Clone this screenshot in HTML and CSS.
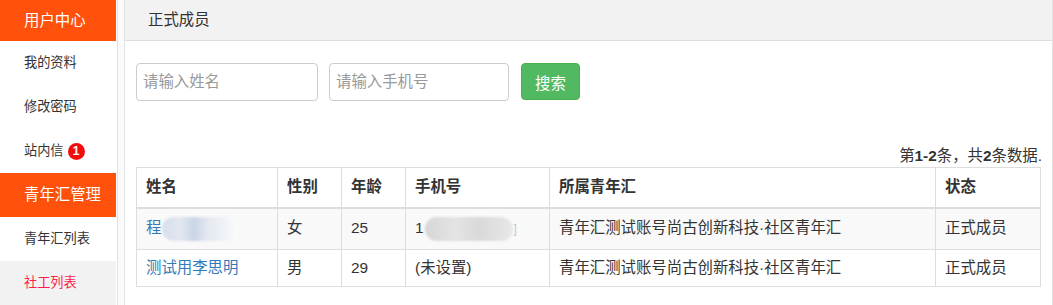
FILE: index.html
```html
<!DOCTYPE html>
<html lang="zh-CN">
<head>
<meta charset="utf-8">
<title>正式成员</title>
<link rel="stylesheet" href="styles.css">
</head>
<body>
<div class="page">
  <aside class="sidebar">
    <div class="side-head">用户中心</div>
    <div class="side-item">我的资料</div>
    <div class="side-item">修改密码</div>
    <div class="side-item">站内信 <span class="badge">1</span></div>
    <div class="side-head">青年汇管理</div>
    <div class="side-item">青年汇列表</div>
    <div class="side-item active">社工列表</div>
  </aside>
  <main class="main">
    <div class="main-head">正式成员</div>
    <div class="content">
      <div class="search-row">
        <input class="field field-name" type="text" placeholder="请输入姓名">
        <input class="field field-phone" type="text" placeholder="请输入手机号">
        <button class="btn-search" type="button">搜索</button>
      </div>
      <div class="summary">第<b>1-2</b>条，共<b>2</b>条数据.</div>
      <table class="grid">
        <thead>
          <tr>
            <th class="c-name">姓名</th>
            <th class="c-sex">性别</th>
            <th class="c-age">年龄</th>
            <th class="c-phone">手机号</th>
            <th class="c-org">所属青年汇</th>
            <th class="c-state">状态</th>
          </tr>
        </thead>
        <tbody>
          <tr class="striped">
            <td><a class="link" href="#">程<span class="blur blur-name"></span></a></td>
            <td>女</td>
            <td>25</td>
            <td>1<span class="blur blur-phone"></span><span class="tail">]</span></td>
            <td>青年汇测试账号尚古创新科技·社区青年汇</td>
            <td>正式成员</td>
          </tr>
          <tr>
            <td><a class="link" href="#">测试用李思明</a></td>
            <td>男</td>
            <td>29</td>
            <td>(未设置)</td>
            <td>青年汇测试账号尚古创新科技·社区青年汇</td>
            <td>正式成员</td>
          </tr>
        </tbody>
      </table>
    </div>
  </main>
</div>
</body>
</html>
```
FILE: styles.css
```css
* { box-sizing: border-box; }
html, body { margin: 0; padding: 0; }
body {
  background: #fafafa;
  font-family: "Liberation Sans", Arial, "Noto Sans CJK SC", sans-serif;
  color: #333;
  height: 305px;
  overflow: hidden;
}
.page {
  display: flex;
  height: 305px;
}
.sidebar {
  width: 118px;
  flex: none;
  background: #fff;
  border-right: 1px solid #e2e2e2;
  padding-right: 1px;
}
.side-head {
  height: 41px;
  line-height: 41px;
  background: #ff500c;
  color: #fff;
  font-size: 15.4px;
  padding-left: 24px;
}
.side-item {
  height: 44px;
  line-height: 44px;
  font-size: 13.2px;
  padding-left: 24px;
  color: #333;
  display: flex;
  align-items: center;
  gap: 4px;
}
.side-head:nth-of-type(5) { height: 44px; line-height: 44px; }
.side-item.active {
  background: #f2f2f2;
  color: #ff1f4b;
}
.badge {
  display: inline-flex;
  align-items: center;
  justify-content: center;
  width: 17px;
  height: 17px;
  border-radius: 50%;
  background: #f20d0d;
  color: #fff;
  font-size: 12px;
  font-weight: bold;
  line-height: 1;
}
.main {
  flex: 1;
  margin-left: 6px;
  background: #fff;
  border: 1px solid #e2e2e2;
  border-top: none;
  border-bottom: none;
}
.main-head {
  height: 41px;
  line-height: 40px;
  background: #f2f2f2;
  border-bottom: 1px solid #dedede;
  padding-left: 23px;
  font-size: 15.4px;
  color: #333;
}
.content {
  padding: 22px 11px 0 11px;
}
.search-row {
  display: flex;
  gap: 11px;
  align-items: flex-start;
}
.field {
  height: 38px;
  border: 1px solid #ccc;
  border-radius: 4px;
  padding: 0 6px;
  font-size: 15.4px;
  font-family: inherit;
  color: #555;
  background: #fff;
  outline: none;
}
.field::placeholder { color: #999; }
.field-name { width: 182px; }
.field-phone { width: 180px; }
.btn-search {
  width: 59px;
  height: 37px;
  margin-left: 1px;
  background: #52b963;
  border: 1px solid #4cae4c;
  border-radius: 4px;
  color: #fff;
  font-size: 15.4px;
  font-family: inherit;
  padding: 0;
}
.summary {
  margin-top: 44px;
  height: 22px;
  line-height: 22px;
  text-align: right;
  font-size: 15.4px;
  margin-right: -1px;
}
.summary b { font-weight: bold; }
.grid {
  width: 904px;
  border-collapse: collapse;
  table-layout: fixed;
  font-size: 15.4px;
}
.grid th, .grid td {
  border: 1px solid #ddd;
  padding: 8px 9px;
  line-height: 20.5px;
  text-align: left;
  vertical-align: middle;
  white-space: nowrap;
  overflow: hidden;
}
.grid th {
  font-weight: bold;
  border-bottom: 2px solid #ddd;
  padding-top: 9px;
  padding-bottom: 9px;
}
.grid .striped td { background: #f9f9f9; }
.c-name { width: 141px; }
.c-sex { width: 64px; }
.c-age { width: 64px; }
.c-phone { width: 144px; }
.c-org { width: 386px; }
.c-state { width: 105px; }
.link {
  color: #337ab7;
  text-decoration: none;
}
.blur {
  display: inline-block;
  vertical-align: middle;
  height: 24px;
  border-radius: 12px;
  filter: blur(1.2px);
}
.blur-name {
  width: 76px;
  margin-left: 1px;
  background: linear-gradient(90deg, #d8dfeb 0%, #e2e7f0 25%, #cbd5e6 42%, #e4e8f0 60%, #eef1f5 80%, #fafbfc 100%);
}
.blur-phone {
  width: 88px;
  margin-left: 1px;
  background: linear-gradient(90deg, #d6d6d6 0%, #e4e4e4 35%, #d9d9d9 60%, #e0e0e0 80%, #e8e8e8 100%);
}
.tail {
  color: #b8c8e0;
  margin-left: 1px;
  font-size: 12px;
}
```
